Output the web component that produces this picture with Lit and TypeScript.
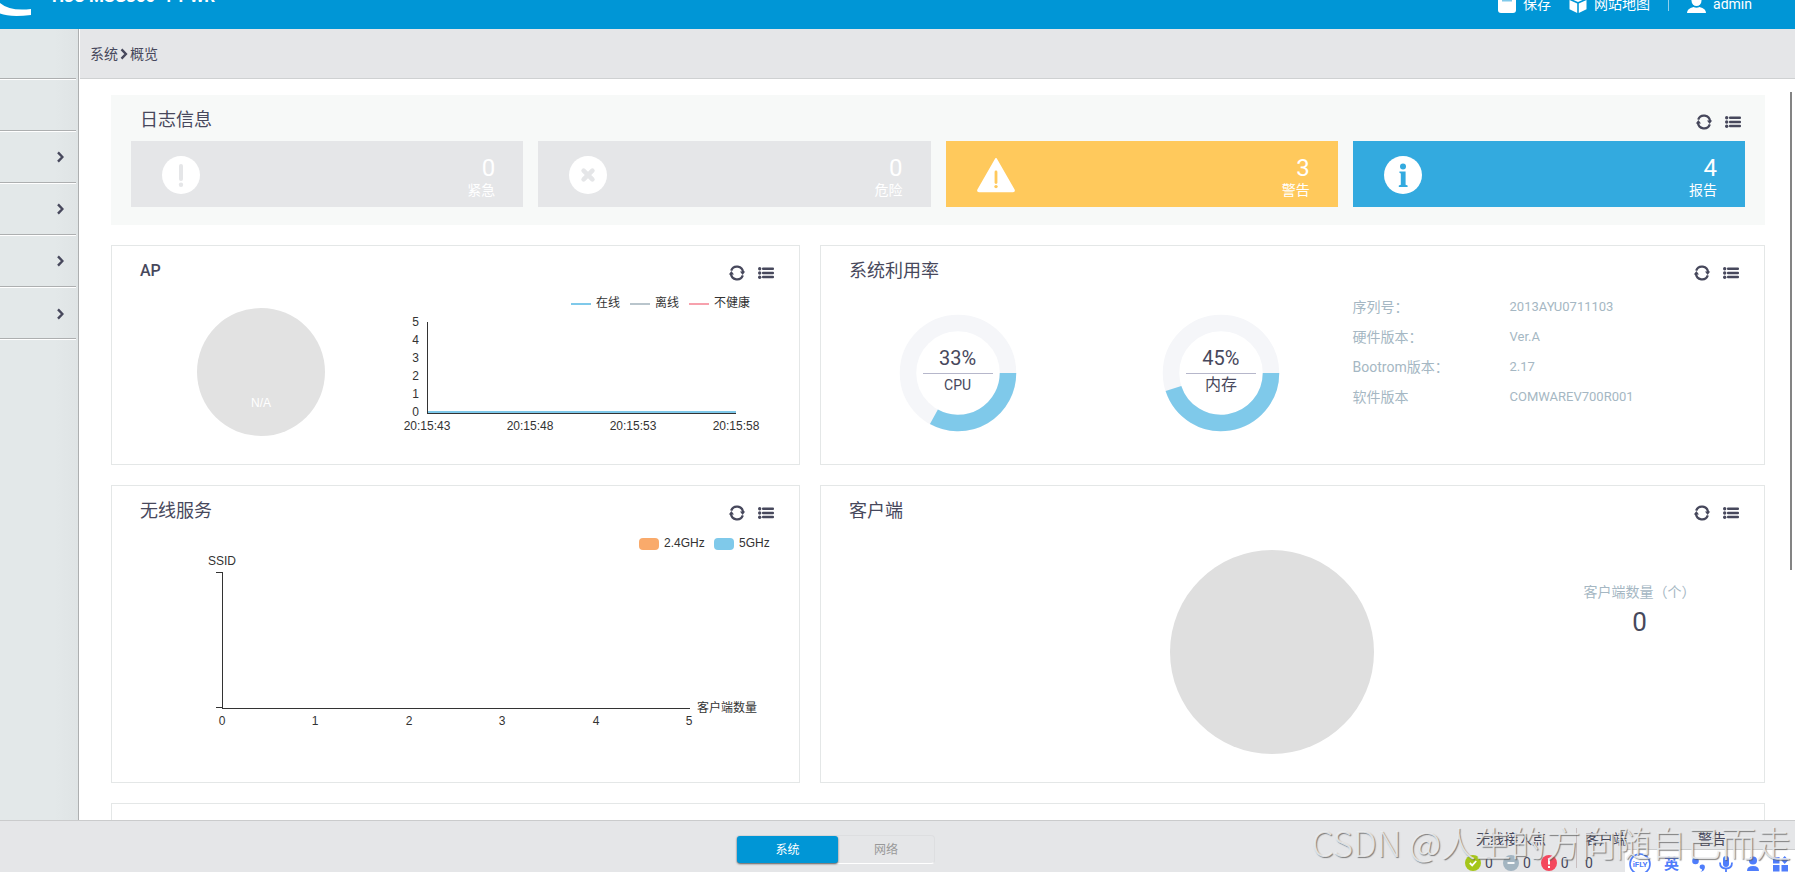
import { LitElement, html, css, svg, nothing } from "lit";
import { customElement, property, state } from "lit/decorators.js";
import { classMap } from "lit/directives/class-map.js";

const resetButton = css`
  button {
    font: inherit;
    color: inherit;
    background: none;
    border: 0;
    margin: 0;
    padding: 0;
    cursor: pointer;
  }
`;

/** Titled dashboard panel with refresh and detail actions. */
@customElement("dash-panel")
class DashPanel extends LitElement {
  @property() heading = "";
  @property({ type: Boolean, reflect: true }) filled = false;
  @property({ type: Boolean, reflect: true }) bare = false;

  static styles = [
    resetButton,
    css`
      :host {
        display: flex;
        flex-direction: column;
        box-sizing: border-box;
        border: 1px solid #e4e7e7;
        background: #fff;
        min-width: 0;
      }
      :host([filled]) {
        border-color: #f7f9f8;
        background: #f7f9f8;
      }
      .head {
        display: flex;
        align-items: center;
        gap: 13px;
        height: 46px;
        padding: 0 25px 0 28px;
        flex: none;
      }
      :host([filled]) .head {
        height: 45px;
        padding-right: 23px;
      }
      h2 {
        flex: 1;
        margin: 0;
        padding-top: 4px;
        font-size: 18px;
        line-height: 24px;
        font-weight: 400;
        color: #47485c;
      }
      :host([filled]) h2 {
        padding-top: 2px;
      }
      h2.latin {
        font-size: 16px;
        font-weight: 500;
      }
      .tool {
        display: block;
        width: 16px;
        height: 16px;
        padding-top: 7px;
        box-sizing: content-box;
      }
      .tool svg {
        display: block;
        overflow: visible;
      }
    `,
  ];

  render() {
    if (this.bare) return nothing;
    return html`
      <div class="head">
        <h2 class=${classMap({ latin: /^[A-Z]+$/.test(this.heading) })}>${this.heading}</h2>
        <button class="tool" aria-label="refresh">
          <svg width="16" height="16" viewBox="0 0 16 16" fill="none" stroke="#47485c" stroke-width="2.3">
            <path d="M2.200 5.600A6.100 6.100 0 0 1 14 7.400" />
            <path d="M13.800 10.400A6.100 6.100 0 0 1 2 8.600" />
            <path d="M11 6.600h5.200L13.600 9.900zM5 9.400H-.2L2.400 6.100z" fill="#47485c" stroke="none" />
          </svg>
        </button>
        <button class="tool" aria-label="details">
          <svg width="16" height="16" viewBox="0 0 16 16" fill="#47485c">
            <circle cx="1.700" cy="3.800" r="1.700" /><rect x="4" y="2.600" width="12" height="2.500" rx="1" />
            <circle cx="1.700" cy="8" r="1.700" /><rect x="4" y="6.700" width="12" height="2.500" rx="1" />
            <circle cx="1.700" cy="12.200" r="1.700" /><rect x="4" y="10.800" width="12" height="2.500" rx="1" />
          </svg>
        </button>
      </div>
      <slot></slot>
    `;
  }
}

/** Ring gauge; the filled arc starts at three o'clock and runs clockwise. */
@customElement("ring-gauge")
class RingGauge extends LitElement {
  @property({ type: Number }) value = 0;
  @property() label = "";

  static styles = css`
    :host {
      display: grid;
      place-items: center;
    }
    svg,
    .caption {
      grid-area: 1 / 1;
    }
    .caption {
      display: flex;
      flex-direction: column;
      align-items: center;
      width: 70px;
      color: #47485c;
    }
    .value {
      font-size: 20px;
      line-height: 26px;
      padding-bottom: 2px;
      width: 70px;
      text-align: center;
      border-bottom: 1px solid #b6b7cb;
    }
    .label {
      font-size: 16px;
      line-height: 22px;
      padding-bottom: 5px;
    }
    .label.latin {
      font-size: 14px;
    }
  `;

  render() {
    const a = (this.value / 100) * Math.PI * 2;
    const x = 59 + 50 * Math.cos(a);
    const y = 59 + 50 * Math.sin(a);
    return html`
      <svg width="118" height="118" viewBox="0 0 118 118" fill="none" stroke-width="16.5">
        <circle cx="59" cy="59" r="50" stroke="#f5f6f9" />
        <path d="M109 59A50 50 0 ${this.value > 50 ? 1 : 0} 1 ${x} ${y}" stroke="#7fc9ea" />
      </svg>
      <div class="caption">
        <span class="value">${this.value}%</span>
        <span class=${classMap({ label: true, latin: /^[A-Z]+$/.test(this.label) })}>${this.label}</span>
      </div>
    `;
  }
}

const tiles = [
  { kind: "urgent", count: 0, text: "紧急", live: "" },
  { kind: "danger", count: 0, text: "危险", live: "" },
  { kind: "warning", count: 3, text: "警告", live: "amber" },
  { kind: "report", count: 4, text: "报告", live: "blue" },
];

const tileIcon: Record<string, unknown> = {
  urgent: svg`<circle cx="19" cy="19" r="19" fill="#fff"/><path d="M19 10v13" stroke="#e5e6e8" stroke-width="4" stroke-linecap="round"/><circle cx="19" cy="28.8" r="2.2" fill="#e5e6e8"/>`,
  danger: svg`<circle cx="19" cy="19" r="19" fill="#fff"/><path d="M14.600 14.600l8.800 8.800M23.400 14.600l-8.800 8.800" stroke="#e5e6e8" stroke-width="4.600" stroke-linecap="round"/>`,
  warning: svg`<path d="M17.600 3.400q1.400-2.600 2.800 0L37.600 33.400q1 2.800-1.600 2.800H2q-2.600 0-1.600-2.800z" fill="#fff"/><path d="M19 16v10.500" stroke="#ffc95c" stroke-width="2.800" stroke-linecap="round"/><circle cx="19" cy="30.600" r="1.700" fill="#ffc95c"/>`,
  report: svg`<circle cx="19" cy="19" r="19" fill="#fff"/><circle cx="19" cy="10.400" r="3" fill="#33aadf"/><path d="M15.400 15.600h6.200v13.200l2 .8v1.400h-8.800v-1.400l2-.8V17.400l-1.400-.6z" fill="#33aadf"/>`,
};

const device = [
  ["序列号：", "2013AYU0711103"],
  ["硬件版本：", "Ver.A"],
  ["Bootrom版本：", "2.17"],
  ["软件版本", "COMWAREV700R001"],
];

const apSeries = [
  { name: "在线", color: "#7fc9ea", x: 459 },
  { name: "离线", color: "#b9c5cc", x: 518 },
  { name: "不健康", color: "#f7a1ad", x: 577 },
];

@customElement("app-root")
class AppRoot extends LitElement {
  @state() private tab = "系统";

  static styles = [
    resetButton,
    css`
      :host {
        display: flex;
        flex-direction: column;
        height: 100vh;
        overflow: hidden;
        position: relative;
        background: #fff;
        color: #47485c;
        font: 14px/20px Roboto, "Noto Sans CJK SC", sans-serif;
      }
      .top {
        flex: none;
        height: 29px;
        overflow: hidden;
        background: #0096d6;
        color: #fff;
      }
      .top-row {
        display: flex;
        align-items: center;
        height: 72px;
        margin-top: -32px;
        padding-right: 43px;
      }
      .mark {
        display: block;
        align-self: flex-end;
        padding-bottom: 20px;
      }
      .product {
        flex: 1;
        margin: 0 0 16px 20px;
        font-size: 17px;
        line-height: 20px;
        font-weight: 700;
      }
      .top a {
        display: flex;
        align-items: center;
        gap: 7px;
        color: #fff;
        text-decoration: none;
        margin-left: 18px;
      }
      .bar {
        width: 1px;
        height: 14px;
        margin-left: 18px;
        background: #8fd0ee;
      }
      .body {
        flex: 1;
        min-height: 0;
        display: flex;
      }
      .side {
        flex: none;
        width: 78px;
        border-right: 1px solid #adafb0;
        background: linear-gradient(90deg, #e3e8e9 70%, #dfe4e5);
      }
      .side button {
        display: flex;
        align-items: center;
        justify-content: flex-end;
        box-sizing: border-box;
        width: 76px;
        height: 52px;
        padding-right: 12px;
        border-bottom: 1px solid #adafb0;
        box-shadow: inset 0 1px #fff;
      }
      .side button:first-child {
        height: 50px;
        box-shadow: none;
      }
      .side button:last-child {
        height: 53px;
        background: linear-gradient(#adafb0, #adafb0) 0 51px / 100% 1px no-repeat,
          linear-gradient(#fff, #fff) 0 52px / 100% 1px no-repeat;
        border-bottom: 0;
      }
      .main {
        flex: 1;
        min-width: 0;
        display: flex;
        flex-direction: column;
        position: relative;
      }
      .crumbs {
        flex: none;
        display: flex;
        align-items: center;
        gap: 2px;
        height: 49px;
        margin-left: 1px;
        padding-left: 10px;
        background: #e5e6e8;
        border-bottom: 1px solid #cfd1d2;
      }
      .crumbs a {
        color: inherit;
        text-decoration: none;
      }
      .scroll {
        flex: 1;
        min-height: 0;
        overflow: hidden;
        display: flex;
        flex-direction: column;
        gap: 20px;
        padding: 16px 30px 0 32px;
      }
      .scroll > * {
        flex: none;
      }
      .thumb {
        position: absolute;
        right: 3px;
        top: 63px;
        width: 2px;
        height: 478px;
        background: #848484;
      }
      .tiles {
        display: grid;
        grid-template-columns: repeat(4, 1fr);
        gap: 15px;
        padding: 0 19px 17px;
      }
      .tile {
        display: flex;
        align-items: center;
        justify-content: space-between;
        box-sizing: border-box;
        height: 66px;
        padding: 2px 28px 0 31px;
        background: #e5e6e8;
        color: #fff;
        text-align: right;
      }
      .tile.amber {
        background: #ffc95c;
      }
      .tile.blue {
        background: #33aadf;
      }
      .tile strong {
        display: block;
        padding-top: 6px;
        font-size: 24px;
        line-height: 24px;
        font-weight: 400;
      }
      .tile span {
        display: block;
        line-height: 20px;
      }
      .pair {
        display: grid;
        grid-template-columns: 689fr 945fr;
        gap: 20px;
      }
      .chart {
        display: block;
        width: 100%;
        font: 12px "Liberation Sans", "Noto Sans CJK SC", sans-serif;
        fill: #333;
      }
      .usage {
        display: grid;
        grid-template-columns: 263fr 263fr 411fr;
        align-items: start;
        padding-left: 5px;
      }
      .usage ring-gauge {
        padding-top: 22px;
      }
      .info {
        display: grid;
        grid-template-columns: 157px 1fr;
        margin: 0;
        line-height: 30px;
        color: #a5b7c3;
      }
      .info dd {
        margin: 0;
        font-size: 13px;
      }
      .clients {
        display: grid;
        grid-template-columns: 208fr 486fr 249fr;
        padding: 18px 0 28px;
      }
      .disc {
        grid-column: 2;
        justify-self: center;
        width: 204px;
        height: 204px;
        border-radius: 50%;
        background: #dfdfdf;
      }
      .count {
        text-align: center;
        padding-top: 32px;
        color: #a5b7c3;
      }
      .count strong {
        display: block;
        font-size: 26px;
        line-height: 40px;
        font-weight: 400;
        color: #47485c;
      }
      .next {
        height: 120px;
      }
      .foot {
        flex: none;
        display: flex;
        align-items: flex-start;
        box-sizing: border-box;
        height: 52px;
        background: #e5e6e8;
        border-top: 1px solid #cacbcc;
        padding-left: 41%;
        font-size: 12px;
      }
      .tabs {
        display: flex;
        margin-top: 14px;
        border: 1px solid #dddee0;
        border-bottom-color: #fff;
        border-radius: 4px;
      }
      .tabs button {
        width: 96px;
        height: 27px;
        color: #999;
      }
      .tabs button.on {
        width: 101px;
        color: #fff;
        background: #0096d6;
        border-radius: 3px;
        box-shadow: 0 1px 2px #555;
      }
      .stats {
        display: flex;
        margin-left: auto;
        margin-top: 7px;
        padding-right: 69px;
        font-size: 14px;
      }
      .stats > div {
        display: grid;
        grid-template-rows: 22px 26px;
        align-items: center;
      }
      .stats .ap {
        width: 111px;
        border-right: 1px solid #c9bfc0;
        height: 40px;
      }
      .stats .ap > span {
        padding-left: 11px;
      }
      .stats .users {
        padding: 0 71px 0 8px;
      }
      .badges {
        display: flex;
        align-items: center;
        gap: 4px;
      }
      .badges svg:not(:first-child) {
        margin-left: 6px;
      }
      .watermark {
        position: absolute;
        right: 4px;
        bottom: 6px;
        font: 300 35px/48px "Noto Sans CJK SC", sans-serif;
        color: rgba(238, 239, 240, 0.85);
        text-shadow: 1px 1px 1px rgba(90, 90, 90, 0.75);
        white-space: nowrap;
        pointer-events: none;
      }
      .ime {
        position: absolute;
        right: 0;
        bottom: 0;
        display: flex;
        align-items: center;
        gap: 13px;
        box-sizing: border-box;
        height: 23px;
        padding: 5px 7px 0 4px;
        border-top: 1px solid #cacbcc;
        background: #fff;
        color: #4f7dfb;
        font-size: 15px;
        font-weight: 700;
      }
      .ime svg {
        display: block;
        overflow: visible;
      }
    `,
  ];

  private chevron(w = 7) {
    return html`<svg width=${w} height="12" viewBox="0 0 7 12" fill="none" stroke="#47485c" stroke-width="2.4">
      <path d="M1 1.400l4.400 4.600L1 10.600" />
    </svg>`;
  }

  private apChart() {
    return html`<svg class="chart" viewBox="0 0 687 172">
      ${apSeries.map(
        (s) => svg`<rect x=${s.x} y="11" width="20" height="2" fill=${s.color}/>
          <text x=${s.x + 25} y="15">${s.name}</text>`
      )}
      <circle cx="149" cy="80" r="64" fill="#e2e2e2" />
      <text x="149" y="115" text-anchor="middle" fill="#fff">N/A</text>
      ${[5, 4, 3, 2, 1, 0].map((n, i) => svg`<text x="307" y=${34 + i * 18} text-anchor="end">${n}</text>`)}
      <rect x="315" y="30" width="1" height="91" />
      <rect x="316" y="119" width="308" height="2" fill="#7fc9ea" />
      <rect x="315" y="121" width="309" height="1" />
      ${["20:15:43", "20:15:48", "20:15:53", "20:15:58"].map(
        (t, i) => svg`<text x=${315 + i * 103} y="138" text-anchor="middle">${t}</text>`
      )}
    </svg>`;
  }

  private ssidChart() {
    return html`<svg class="chart" viewBox="0 0 687 250">
      <rect x="527" y="6" width="20" height="12" rx="4" fill="#f9aa6b" />
      <text x="552" y="15">2.4GHz</text>
      <rect x="602" y="6" width="20" height="12" rx="4" fill="#7fc9ea" />
      <text x="627" y="15">5GHz</text>
      <text x="110" y="33" text-anchor="middle">SSID</text>
      <rect x="104" y="40" width="6" height="1" />
      <rect x="104" y="175" width="6" height="1" />
      <rect x="110" y="40" width="1" height="137" />
      <rect x="110" y="176" width="468" height="1" />
      ${[0, 1, 2, 3, 4, 5].map(
        (n) => svg`<text x=${110 + Math.round(n * 93.4)} y="193" text-anchor="middle">${n}</text>`
      )}
      <text x="585" y="180">客户端数量</text>
    </svg>`;
  }

  render() {
    return html`
      <header class="top">
        <div class="top-row">
          <svg class="mark" width="32" height="20" viewBox="0 0 32 20" fill="#fff">
            <path d="M0 3V13.500Q10 17.500 31 15V9Q10 11.500 0 3z" />
          </svg>
          <div class="product">H3C MSG360-4-PWR</div>
          <a href="#save">
            <svg width="18" height="18" viewBox="0 0 18 18">
              <rect width="18" height="18" rx="3" fill="#fff" />
              <path d="M4 0h10v6.500H4z" fill="#7fc9ea" />
            </svg>
            保存
          </a>
          <a href="#map">
            <svg width="18" height="18" viewBox="0 0 18 18" fill="#fff">
              <path d="M9 0l8 3.500L9 7 1 3.500zM.5 5l7.700 3.500V18L.5 14.200zM17.500 5L9.800 8.500V18l7.700-3.800z" />
            </svg>
            网站地图
          </a>
          <span class="bar"></span>
          <a href="#user">
            <svg width="19" height="18" viewBox="0 0 19 18" fill="#fff">
              <ellipse cx="9.500" cy="5.500" rx="5" ry="5.500" />
              <path d="M0 18q0-4.500 6.500-6 3 1.400 6 0Q19 13.500 19 18z" />
            </svg>
            admin
          </a>
        </div>
      </header>
      <div class="body">
        <nav class="side">
          ${[false, false, true, true, true, true].map(
            (more) => html`<button aria-label="menu">${more ? this.chevron() : nothing}</button>`
          )}
        </nav>
        <main class="main">
          <div class="crumbs"><a href="#system">系统</a>${this.chevron(8)}<a href="#overview">概览</a></div>
          <div class="scroll">
            <dash-panel heading="日志信息" filled>
              <div class="tiles">
                ${tiles.map(
                  (t) => html`<div class="tile ${t.live}">
                    <svg width="38" height="38" viewBox="0 0 38 38">${tileIcon[t.kind]}</svg>
                    <div><strong>${t.count}</strong><span>${t.text}</span></div>
                  </div>`
                )}
              </div>
            </dash-panel>
            <div class="pair">
              <dash-panel heading="AP">${this.apChart()}</dash-panel>
              <dash-panel heading="系统利用率">
                <div class="usage">
                  <ring-gauge value="33" label="CPU"></ring-gauge>
                  <ring-gauge value="45" label="内存"></ring-gauge>
                  <dl class="info">${device.map(([k, v]) => html`<dt>${k}</dt><dd>${v}</dd>`)}</dl>
                </div>
              </dash-panel>
            </div>
            <div class="pair">
              <dash-panel heading="无线服务">${this.ssidChart()}</dash-panel>
              <dash-panel heading="客户端">
                <div class="clients">
                  <div class="disc"></div>
                  <div class="count">客户端数量（个）<strong>0</strong></div>
                </div>
              </dash-panel>
            </div>
            <dash-panel class="next" bare></dash-panel>
          </div>
          <div class="thumb"></div>
        </main>
      </div>
      <footer class="foot">
        <div class="tabs">
          ${["系统", "网络"].map(
            (t) => html`<button class=${classMap({ on: this.tab === t })} @click=${() => (this.tab = t)}>${t}</button>`
          )}
        </div>
        <div class="stats">
          <div class="ap">
            <span>无线接入点</span>
            <div class="badges">
              <svg width="16" height="16" viewBox="0 0 16 16"><circle cx="8" cy="8" r="8" fill="#a5c61a" /><path d="M4.800 8l2.400 2.400 4-4.400" fill="none" stroke="#fff" stroke-width="1.800" /></svg>0
              <svg width="16" height="16" viewBox="0 0 16 16"><circle cx="8" cy="8" r="8" fill="#a3b5c1" /><path d="M4.500 8h7" stroke="#fff" stroke-width="1.800" /></svg>0
              <svg width="16" height="16" viewBox="0 0 16 16"><circle cx="8" cy="8" r="8" fill="#f4485d" /><path d="M8 3.500v6M8 11v2" stroke="#fff" stroke-width="2" /></svg>0
            </div>
          </div>
          <div class="users"><span>客户端</span><div>0</div></div>
          <div><span>警告</span></div>
        </div>
      </footer>
      <div class="ime">
        <svg width="22" height="18" viewBox="0 0 22 18">
          <circle cx="11" cy="9" r="10" fill="none" stroke="#4f7dfb" stroke-width="1.600" />
          <text x="11" y="12" text-anchor="middle" font-size="8" font-weight="700" fill="#4f7dfb">iFLY</text>
        </svg>
        <span>英</span>
        <svg width="14" height="16" viewBox="0 0 14 16" fill="#4f7dfb">
          <circle cx="3.500" cy="5" r="3.300" />
          <path d="M7.500 11a2.700 2.700 0 1 1 5.400.5Q12.500 15 8.500 16q1.800-1.600 1.600-2.600Q7.600 13 7.500 11z" />
        </svg>
        <svg width="14" height="16" viewBox="0 0 14 16" fill="#4f7dfb">
          <rect x="4" y="0" width="6" height="11" rx="3" />
          <path d="M1 6.500q0 6 6 6t6-6M7 12.500V16" fill="none" stroke="#4f7dfb" stroke-width="1.800" />
        </svg>
        <svg width="14" height="16" viewBox="0 0 14 16" fill="#4f7dfb">
          <circle cx="7" cy="4.500" r="4" /><path d="M1 15q0-5 6-5t6 5z" />
        </svg>
        <svg width="15" height="16" viewBox="0 0 15 16" fill="#4f7dfb">
          <path d="M0 1h6.500v6.500H0zM0 9h6.500v6.500H0zM8.500 9H15v6.500H8.500zM11.700 0l3.600 4-3.600 4-3.600-4z" />
        </svg>
      </div>
      <div class="watermark">CSDN @人生的方向随自己而走</div>
    `;
  }
}
